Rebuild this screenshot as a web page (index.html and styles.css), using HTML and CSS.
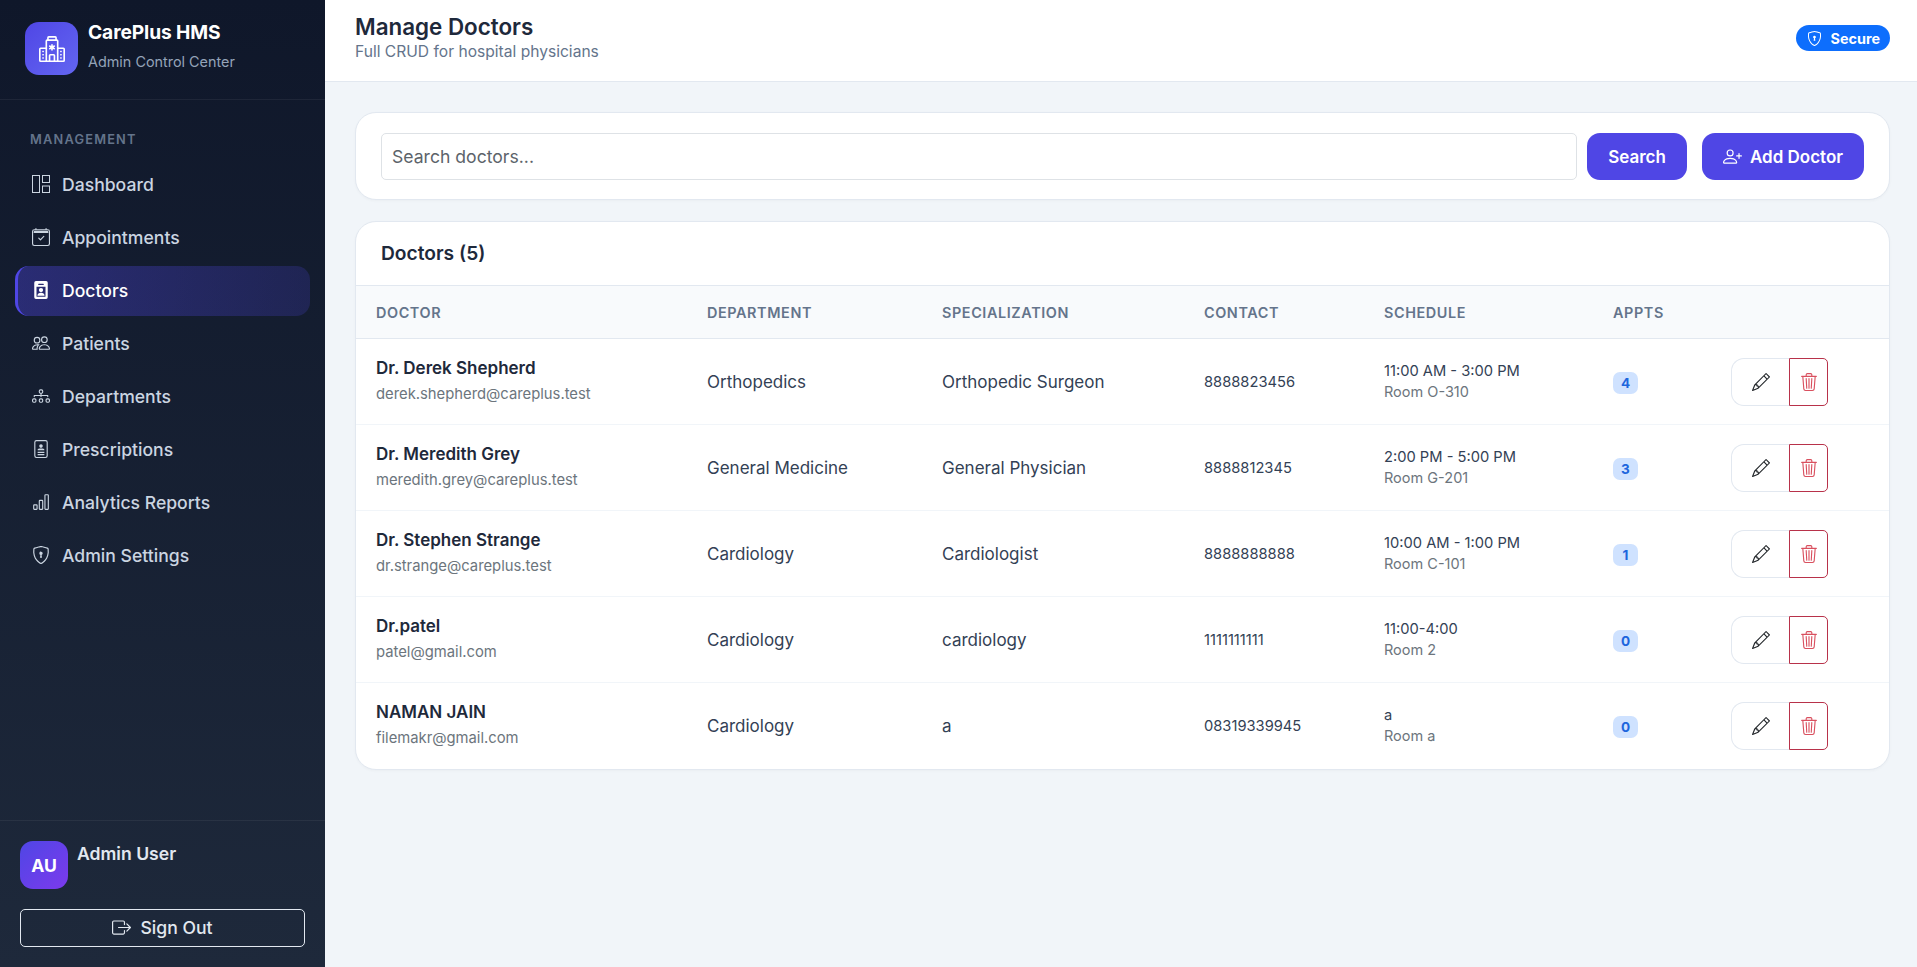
FILE: index.html
```html
<!DOCTYPE html>
<html lang="en">
<head>
<meta charset="utf-8">
<title>Manage Doctors</title>
<link rel="stylesheet" href="styles.css">
</head>
<body>
<svg class="sprite" width="0" height="0" aria-hidden="true">
  <symbol id="i-pencil" viewBox="0 0 16 16"><path fill="currentColor" d="M12.146.146a.5.5 0 0 1 .708 0l3 3a.5.5 0 0 1 0 .708l-10 10a.5.5 0 0 1-.168.11l-5 2a.5.5 0 0 1-.65-.65l2-5a.5.5 0 0 1 .11-.168l10-10zM11.207 2.5 13.5 4.793 14.793 3.5 12.5 1.207 11.207 2.5zm1.586 3L10.5 3.207 4 9.707V10h.5a.5.5 0 0 1 .5.5v.5h.5a.5.5 0 0 1 .5.5v.5h.293l6.5-6.5zm-9.761 5.175-.106.106-1.528 3.821 3.821-1.528.106-.106A.5.5 0 0 1 5 12.5V12h-.5a.5.5 0 0 1-.5-.5V11h-.5a.5.5 0 0 1-.468-.325z"/></symbol>
  <symbol id="i-trash" viewBox="0 0 16 16"><path fill="currentColor" d="M6.5 1h3a.5.5 0 0 1 .5.5v1H6v-1a.5.5 0 0 1 .5-.5ZM11 2.5v-1A1.5 1.5 0 0 0 9.5 0h-3A1.5 1.5 0 0 0 5 1.5v1H2.506a.58.58 0 0 0-.01 0H1.5a.5.5 0 0 0 0 1h.538l.853 10.66A2 2 0 0 0 4.885 16h6.23a2 2 0 0 0 1.994-1.84l.853-10.66h.538a.5.5 0 0 0 0-1h-.995a.59.59 0 0 0-.01 0H11Zm1.958 1-.846 10.58a1 1 0 0 1-.997.92h-6.23a1 1 0 0 1-.997-.92L3.042 3.5h9.916Zm-7.487 1a.5.5 0 0 1 .528.47l.5 8.5a.5.5 0 0 1-.998.06L5 5.03a.5.5 0 0 1 .47-.53Zm5.058 0a.5.5 0 0 1 .47.53l-.5 8.5a.5.5 0 1 1-.998-.06l.5-8.5a.5.5 0 0 1 .528-.47ZM8 4.5a.5.5 0 0 1 .5.5v8.5a.5.5 0 0 1-1 0V5a.5.5 0 0 1 .5-.5Z"/></symbol>
  <symbol id="i-shield" viewBox="0 0 16 16"><path fill="currentColor" d="M5.338 1.59a61.44 61.44 0 0 0-2.837.856.481.481 0 0 0-.328.39c-.554 4.157.726 7.19 2.253 9.188a10.725 10.725 0 0 0 2.287 2.233c.346.244.652.42.893.533.12.057.218.095.293.118a.55.55 0 0 0 .101.025.615.615 0 0 0 .1-.025c.076-.023.174-.061.294-.118.24-.113.547-.29.893-.533a10.726 10.726 0 0 0 2.287-2.233c1.527-1.997 2.807-5.031 2.253-9.188a.48.48 0 0 0-.328-.39c-.651-.213-1.75-.56-2.837-.855C9.552 1.29 8.531 1.067 8 1.067c-.53 0-1.552.223-2.662.524zM5.072.56C6.157.265 7.31 0 8 0s1.843.265 2.928.56c1.11.3 2.229.655 2.887.87a1.54 1.54 0 0 1 1.044 1.262c.596 4.477-.787 7.795-2.465 9.99a11.775 11.775 0 0 1-2.517 2.453 7.159 7.159 0 0 1-1.048.625c-.28.132-.581.24-.829.24s-.548-.108-.829-.24a7.158 7.158 0 0 1-1.048-.625 11.777 11.777 0 0 1-2.517-2.453C1.928 10.487.545 7.169 1.141 2.692A1.54 1.54 0 0 1 2.185 1.43 62.456 62.456 0 0 1 5.072.56z"/><path fill="currentColor" d="M9.5 6.5a1.5 1.5 0 0 1-1 1.415l.385 1.99a.5.5 0 0 1-.491.595h-.788a.5.5 0 0 1-.49-.595l.384-1.99a1.5 1.5 0 1 1 2-1.415z"/></symbol>
</svg>
<div class="app">
  <aside class="sidebar">
    <div class="brand">
      <div class="brand-logo">
        <svg class="brand-icon" viewBox="0 0 16 16"><path fill="currentColor" d="M8.5 5.034v1.1l.953-.55.5.867L9 7l.953.55-.5.866-.953-.55v1.1h-1v-1.1l-.953.55-.5-.866L7 7l-.953-.55.5-.866.953.55v-1.1h1ZM13.25 9a.25.25 0 0 0-.25.25v.5c0 .138.112.25.25.25h.5a.25.25 0 0 0 .25-.25v-.5a.25.25 0 0 0-.25-.25h-.5ZM13 11.25a.25.25 0 0 1 .25-.25h.5a.25.25 0 0 1 .25.25v.5a.25.25 0 0 1-.25.25h-.5a.25.25 0 0 1-.25-.25v-.5Zm.25 1.75a.25.25 0 0 0-.25.25v.5c0 .138.112.25.25.25h.5a.25.25 0 0 0 .25-.25v-.5a.25.25 0 0 0-.25-.25h-.5Zm-11-4a.25.25 0 0 0-.25.25v.5c0 .138.112.25.25.25h.5A.25.25 0 0 0 3 9.75v-.5A.25.25 0 0 0 2.75 9h-.5Zm0 2a.25.25 0 0 0-.25.25v.5c0 .138.112.25.25.25h.5a.25.25 0 0 0 .25-.25v-.5a.25.25 0 0 0-.25-.25h-.5ZM2 13.25a.25.25 0 0 1 .25-.25h.5a.25.25 0 0 1 .25.25v.5a.25.25 0 0 1-.25.25h-.5a.25.25 0 0 1-.25-.25v-.5Z"/><path fill="currentColor" d="M5 1a1 1 0 0 1 1-1h4a1 1 0 0 1 1 1v1a1 1 0 0 1 1 1v4h3a1 1 0 0 1 1 1v7a1 1 0 0 1-1 1H1a1 1 0 0 1-1-1V8a1 1 0 0 1 1-1h3V3a1 1 0 0 1 1-1V1Zm2 14h2v-3H7v3Zm3 0h1V3H5v12h1v-3a1 1 0 0 1 1-1h2a1 1 0 0 1 1 1v3Zm0-14H6v1h4V1Zm2 7v7h3V8h-3Zm-8 7V8H1v7h3Z"/></svg>
      </div>
      <div class="brand-text">
        <div class="brand-name">CarePlus HMS</div>
        <div class="brand-sub">Admin Control Center</div>
      </div>
    </div>
    <nav class="nav">
      <div class="nav-label">MANAGEMENT</div>
      <a class="nav-item">
        <svg class="nav-icon" viewBox="0 0 18 18" fill="none" stroke="currentColor" stroke-width="1"><rect x=".5" y=".5" width="7" height="17" /><rect x="10.5" y=".5" width="7" height="7"/><rect x="10.5" y="11" width="7" height="6.5"/></svg>
        <span>Dashboard</span>
      </a>
      <a class="nav-item">
        <svg class="nav-icon" viewBox="0 0 16 16"><path fill="currentColor" d="M10.854 7.146a.5.5 0 0 1 0 .708l-3 3a.5.5 0 0 1-.708 0l-1.5-1.5a.5.5 0 1 1 .708-.708L7.5 9.793l2.646-2.647a.5.5 0 0 1 .708 0z"/><path fill="currentColor" d="M3.5 0a.5.5 0 0 1 .5.5V1h8V.5a.5.5 0 0 1 1 0V1h1a2 2 0 0 1 2 2v11a2 2 0 0 1-2 2H2a2 2 0 0 1-2-2V3a2 2 0 0 1 2-2h1V.5a.5.5 0 0 1 .5-.5zM2 2a1 1 0 0 0-1 1v11a1 1 0 0 0 1 1h12a1 1 0 0 0 1-1V3a1 1 0 0 0-1-1H2z"/><path fill="currentColor" d="M2.5 2.5h11a1 1 0 0 1 1 1v1h-13v-1a1 1 0 0 1 1-1z"/></svg>
        <span>Appointments</span>
      </a>
      <a class="nav-item active">
        <svg class="nav-icon" viewBox="0 0 16 16"><path fill="currentColor" fill-rule="evenodd" d="M3.5 0A1.5 1.5 0 0 0 2 1.5v13A1.5 1.5 0 0 0 3.5 16h9a1.5 1.5 0 0 0 1.5-1.5v-13A1.5 1.5 0 0 0 12.5 0h-9ZM6 2.5h4a.5.5 0 0 1 0 1H6a.5.5 0 0 1 0-1ZM4 5h8v8.500a.5.5 0 0 1-.5.5h-7a.5.5 0 0 1-.5-.5V5Z"/><path fill="currentColor" d="M8 6.200a1.900 1.900 0 1 1 0 3.800 1.900 1.900 0 0 1 0-3.800ZM4.800 13.200c0-1.800 1.400-2.700 3.200-2.700s3.200.9 3.200 2.700H4.800Z"/></svg>
        <span>Doctors</span>
      </a>
      <a class="nav-item">
        <svg class="nav-icon" viewBox="0 0 16 16"><path fill="currentColor" d="M15 14s1 0 1-1-1-4-5-4-5 3-5 4 1 1 1 1h8zm-7.978-1A.261.261 0 0 1 7 12.996c.001-.264.167-1.030.76-1.720C8.312 10.629 9.282 10 11 10c1.717 0 2.687.63 3.240 1.276.593.69.758 1.457.76 1.720l-.008.002a.274.274 0 0 1-.014.002H7.022zM11 7a2 2 0 1 0 0-4 2 2 0 0 0 0 4zm3-2a3 3 0 1 1-6 0 3 3 0 0 1 6 0zM6.936 9.280a5.880 5.880 0 0 0-1.230-.247A7.350 7.350 0 0 0 5 9c-4 0-5 3-5 4 0 .667.333 1 1 1h4.216A2.238 2.238 0 0 1 5 13c0-1.010.377-2.042 1.090-2.904.243-.294.526-.569.846-.816zM4.920 10A5.420 5.420 0 0 0 4 13H1c0-.260.164-1.030.76-1.724.545-.636 1.492-1.256 3.160-1.275zM1.500 5.500a3 3 0 1 1 6 0 3 3 0 0 1-6 0zm3-2a2 2 0 1 0 0 4 2 2 0 0 0 0-4z"/></svg>
        <span>Patients</span>
      </a>
      <a class="nav-item">
        <svg class="nav-icon" viewBox="0 0 16 16"><path fill="currentColor" fill-rule="evenodd" d="M6 3.5A1.5 1.5 0 0 1 7.5 2h1A1.5 1.5 0 0 1 10 3.5v1A1.5 1.5 0 0 1 8.5 6v1H14a.5.5 0 0 1 .5.5v1a.5.5 0 0 1-1 0V8h-5v.5a.5.5 0 0 1-1 0V8h-5v.5a.5.5 0 0 1-1 0v-1A.5.5 0 0 1 2 7h5.5V6A1.5 1.5 0 0 1 6 4.5v-1zM8.5 5a.5.5 0 0 0 .5-.5v-1a.5.5 0 0 0-.5-.5h-1a.5.5 0 0 0-.5.5v1a.5.5 0 0 0 .5.5h1zM0 11.500A1.500 1.500 0 0 1 1.500 10h1A1.500 1.500 0 0 1 4 11.500v1A1.500 1.500 0 0 1 2.500 14h-1A1.500 1.500 0 0 1 0 12.500v-1zm1.500-.5a.5.5 0 0 0-.5.5v1a.5.5 0 0 0 .5.5h1a.5.5 0 0 0 .5-.5v-1a.5.5 0 0 0-.5-.5h-1zm4.500.5A1.500 1.500 0 0 1 7.500 10h1a1.500 1.500 0 0 1 1.500 1.500v1A1.500 1.500 0 0 1 8.500 14h-1A1.500 1.500 0 0 1 6 12.500v-1zm1.500-.5a.5.5 0 0 0-.5.5v1a.5.5 0 0 0 .5.5h1a.5.5 0 0 0 .5-.5v-1a.5.5 0 0 0-.5-.5h-1zm4.500.5a1.500 1.500 0 0 1 1.500-1.500h1a1.500 1.500 0 0 1 1.500 1.500v1a1.500 1.500 0 0 1-1.500 1.500h-1a1.500 1.500 0 0 1-1.500-1.500v-1zm1.500-.5a.5.5 0 0 0-.5.5v1a.5.5 0 0 0 .5.5h1a.5.5 0 0 0 .5-.5v-1a.5.5 0 0 0-.5-.5h-1z"/></svg>
        <span>Departments</span>
      </a>
      <a class="nav-item">
        <svg class="nav-icon" viewBox="0 0 16 16"><path fill="currentColor" d="M8 7a1.600 1.600 0 1 0 0-3.200A1.600 1.600 0 0 0 8 7Zm-3 1.600c0-.6.9-1 3-1s3 .4 3 1v.4H5v-.4Z"/><path fill="currentColor" d="M5 10.500h6v1H5zM5 12.500h6v1H5z"/><path fill="currentColor" d="M4 0h8a2 2 0 0 1 2 2v12a2 2 0 0 1-2 2H4a2 2 0 0 1-2-2V2a2 2 0 0 1 2-2Zm0 1a1 1 0 0 0-1 1v12a1 1 0 0 0 1 1h8a1 1 0 0 0 1-1V2a1 1 0 0 0-1-1H4Z"/></svg>
        <span>Prescriptions</span>
      </a>
      <a class="nav-item">
        <svg class="nav-icon" viewBox="0 0 16 16"><path fill="currentColor" d="M4 11H2v3h2v-3zm5-4H7v7h2V7zm5-5v12h-2V2h2zm-2-1a1 1 0 0 0-1 1v12a1 1 0 0 0 1 1h2a1 1 0 0 0 1-1V2a1 1 0 0 0-1-1h-2zM6 7a1 1 0 0 1 1-1h2a1 1 0 0 1 1 1v7a1 1 0 0 1-1 1H7a1 1 0 0 1-1-1V7zm-5 4a1 1 0 0 1 1-1h2a1 1 0 0 1 1 1v3a1 1 0 0 1-1 1H2a1 1 0 0 1-1-1v-3z"/></svg>
        <span>Analytics Reports</span>
      </a>
      <a class="nav-item">
        <svg class="nav-icon"><use href="#i-shield"/></svg>
        <span>Admin Settings</span>
      </a>
    </nav>
    <div class="side-foot">
      <div class="user">
        <div class="avatar">AU</div>
        <div class="user-name">Admin User</div>
      </div>
      <button class="signout">
        <svg class="signout-icon" viewBox="0 0 16 16"><path fill="currentColor" fill-rule="evenodd" d="M10 12.500a.5.5 0 0 1-.5.5h-8a.5.5 0 0 1-.5-.5v-9a.5.5 0 0 1 .5-.5h8a.5.5 0 0 1 .5.5v2a.5.5 0 0 0 1 0v-2A1.500 1.500 0 0 0 9.500 2h-8A1.500 1.500 0 0 0 0 3.500v9A1.500 1.500 0 0 0 1.500 14h8a1.500 1.500 0 0 0 1.500-1.500v-2a.5.5 0 0 0-1 0v2z"/><path fill="currentColor" fill-rule="evenodd" d="M15.854 8.354a.5.5 0 0 0 0-.708l-3-3a.5.5 0 0 0-.708.708L14.293 7.500H5.500a.5.5 0 0 0 0 1h8.793l-2.147 2.146a.5.5 0 0 0 .708.708l3-3z"/></svg>
        <span>Sign Out</span>
      </button>
    </div>
  </aside>
  <div class="main">
    <header class="topbar">
      <div>
        <h1 class="title">Manage Doctors</h1>
        <div class="subtitle">Full CRUD for hospital physicians</div>
      </div>
      <div class="secure"><svg class="secure-icon"><use href="#i-shield"/></svg><span>Secure</span></div>
    </header>
    <main class="content">
      <section class="card search-card">
        <input class="search-input" type="text" placeholder="Search doctors...">
        <button class="btn">Search</button>
        <button class="btn btn-add">
          <svg class="btn-icon" viewBox="0 0 16 16"><path fill="currentColor" d="M6 8a3 3 0 1 0 0-6 3 3 0 0 0 0 6zm2-3a2 2 0 1 1-4 0 2 2 0 0 1 4 0zm4 8c0 1-1 1-1 1H1s-1 0-1-1 1-4 6-4 6 3 6 4zm-1-.004c-.001-.246-.154-.986-.832-1.664C9.516 10.680 8.289 10 6 10c-2.290 0-3.516.68-4.168 1.332-.678.678-.83 1.418-.832 1.664h10z"/><path fill="currentColor" d="M13.500 5a.5.5 0 0 1 .5.5V7h1.500a.5.5 0 0 1 0 1H14v1.500a.5.5 0 0 1-1 0V8h-1.500a.5.5 0 0 1 0-1H13V5.500a.5.5 0 0 1 .5-.5z"/></svg>
          <span>Add Doctor</span>
        </button>
      </section>
      <section class="card table-card">
        <h2 class="table-title">Doctors (5)</h2>
        <table class="table">
          <colgroup>
            <col class="c-doctor"><col class="c-dept"><col class="c-spec"><col class="c-contact"><col class="c-sched"><col class="c-appts"><col>
          </colgroup>
          <thead>
            <tr><th>Doctor</th><th>Department</th><th>Specialization</th><th>Contact</th><th>Schedule</th><th>Appts</th><th></th></tr>
          </thead>
          <tbody>
            <tr>
              <td><div class="doc-name">Dr. Derek Shepherd</div><div class="doc-mail">derek.shepherd@careplus.test</div></td>
              <td>Orthopedics</td><td>Orthopedic Surgeon</td><td class="small">8888823456</td>
              <td class="small"><div>11:00 AM - 3:00 PM</div><div class="room">Room O-310</div></td>
              <td><span class="count">4</span></td>
              <td><div class="actions"><button class="act act-edit"><svg class="act-icon"><use href="#i-pencil"/></svg></button><button class="act act-del"><svg class="act-icon"><use href="#i-trash"/></svg></button></div></td>
            </tr>
            <tr>
              <td><div class="doc-name">Dr. Meredith Grey</div><div class="doc-mail">meredith.grey@careplus.test</div></td>
              <td>General Medicine</td><td>General Physician</td><td class="small">8888812345</td>
              <td class="small"><div>2:00 PM - 5:00 PM</div><div class="room">Room G-201</div></td>
              <td><span class="count">3</span></td>
              <td><div class="actions"><button class="act act-edit"><svg class="act-icon"><use href="#i-pencil"/></svg></button><button class="act act-del"><svg class="act-icon"><use href="#i-trash"/></svg></button></div></td>
            </tr>
            <tr>
              <td><div class="doc-name">Dr. Stephen Strange</div><div class="doc-mail">dr.strange@careplus.test</div></td>
              <td>Cardiology</td><td>Cardiologist</td><td class="small">8888888888</td>
              <td class="small"><div>10:00 AM - 1:00 PM</div><div class="room">Room C-101</div></td>
              <td><span class="count">1</span></td>
              <td><div class="actions"><button class="act act-edit"><svg class="act-icon"><use href="#i-pencil"/></svg></button><button class="act act-del"><svg class="act-icon"><use href="#i-trash"/></svg></button></div></td>
            </tr>
            <tr>
              <td><div class="doc-name">Dr.patel</div><div class="doc-mail">patel@gmail.com</div></td>
              <td>Cardiology</td><td>cardiology</td><td class="small">1111111111</td>
              <td class="small"><div>11:00-4:00</div><div class="room">Room 2</div></td>
              <td><span class="count">0</span></td>
              <td><div class="actions"><button class="act act-edit"><svg class="act-icon"><use href="#i-pencil"/></svg></button><button class="act act-del"><svg class="act-icon"><use href="#i-trash"/></svg></button></div></td>
            </tr>
            <tr>
              <td><div class="doc-name">NAMAN JAIN</div><div class="doc-mail">filemakr@gmail.com</div></td>
              <td>Cardiology</td><td>a</td><td class="small">08319339945</td>
              <td class="small"><div>a</div><div class="room">Room a</div></td>
              <td><span class="count">0</span></td>
              <td><div class="actions"><button class="act act-edit"><svg class="act-icon"><use href="#i-pencil"/></svg></button><button class="act act-del"><svg class="act-icon"><use href="#i-trash"/></svg></button></div></td>
            </tr>
          </tbody>
        </table>
      </section>
    </main>
  </div>
</div>
</body>
</html>
```

FILE: styles.css
```css
* { box-sizing: border-box; }
html, body { margin: 0; height: 100%; }
body { font-family: Inter, "Liberation Sans", sans-serif; color: #1e293b; background: #f1f5f9; overflow: hidden; }
.sprite { position: absolute; }
.app { display: flex; height: 967px; }

.sidebar { width: 325px; flex: none; display: flex; flex-direction: column; background: linear-gradient(180deg, #0f172a 0%, #1e293b 100%); color: #fff; }
.brand { height: 100px; padding: 22px 25px 0; display: flex; gap: 10px; border-bottom: 1px solid rgba(255,255,255,.06); }
.brand-logo { width: 53px; height: 53px; border-radius: 14px; background: linear-gradient(135deg, #4f46e5, #6366f1); display: flex; align-items: center; justify-content: center; }
.brand-icon { width: 26px; height: 26px; color: #fff; }
.brand-name { font-size: 19.2px; font-weight: 700; line-height: 20px; letter-spacing: -.1px; }
.brand-sub { font-size: 14.4px; line-height: 20px; color: #94a3b8; margin-top: 10px; }

.nav { flex: 1; padding: 30px 15px 0; display: flex; flex-direction: column; }
.nav-label { font-size: 12.8px; font-weight: 600; letter-spacing: 1.2px; color: #64748b; padding-left: 15px; line-height: 20px; margin-bottom: 10px; }
.nav-item { height: 50px; margin-bottom: 3px; padding: 0 0 2px 14px; display: flex; align-items: center; gap: 12px; font-size: 17.6px; font-weight: 500; color: #cbd5e1; border-radius: 14px; border-left: 3px solid transparent; }
.nav-item .nav-icon { width: 18px; height: 18px; flex: none; }
.nav-item.active { color: #fff; border-left-color: #4f46e5; background: linear-gradient(90deg, rgba(79,70,229,.38), rgba(79,70,229,.2)); }

.side-foot { border-top: 1px solid rgba(255,255,255,.06); padding: 20px; height: 147px; }
.user { display: flex; gap: 9px; height: 48px; }
.avatar { width: 48px; height: 48px; border-radius: 13px; background: linear-gradient(135deg, #4f46e5, #7c3aed); display: flex; align-items: center; justify-content: center; font-size: 17.6px; font-weight: 700; color: #fff; }
.user-name { font-size: 17.6px; font-weight: 600; color: #e2e8f0; line-height: 24px; margin-top: 1px; }
.signout { margin-top: 20px; width: 285px; height: 38px; background: transparent; border: 1px solid #e2e8f0; border-radius: 5px; color: #e2e8f0; font: 500 17.6px Inter, "Liberation Sans", sans-serif; display: flex; align-items: center; justify-content: center; gap: 9px; padding: 0 0 1px; }
.signout-icon { width: 19px; height: 19px; }

.main { flex: 1; min-width: 0; display: flex; flex-direction: column; }
.topbar { height: 82px; background: #fff; border-bottom: 1px solid #e2e8f0; padding: 13px 27px 0 30px; display: flex; justify-content: space-between; align-items: flex-start; }
.title { margin: 0; font-size: 22.4px; font-weight: 600; line-height: 28px; color: #1e293b; }
.subtitle { font-size: 15.6px; line-height: 20px; color: #64748b; margin-top: 1px; }
.secure { margin-top: 12px; height: 26px; padding: 0 10px 0 11px; border-radius: 13px; background: #0d6efd; color: #fff; display: flex; align-items: center; gap: 8px; font-size: 14.4px; font-weight: 700; }
.secure-icon { width: 15px; height: 15px; }

.content { padding: 30px 27px 0 30px; display: flex; flex-direction: column; gap: 21px; }
.card { background: #fff; border: 1px solid #e2e8f0; border-radius: 21px; box-shadow: 0 1px 3px rgba(15,23,42,.03); }
.search-card { height: 88px; padding: 20px 25px 0; display: flex; gap: 10px; align-items: flex-start; }
.search-input { flex: 1; min-width: 0; height: 47px; border: 1px solid #dee2e6; border-radius: 5px; padding: 0 10px; font: 400 17.6px Inter, "Liberation Sans", sans-serif; color: #212529; }
.search-input::placeholder { color: #5c636a; opacity: 1; }
.btn { height: 47px; border: 0; border-radius: 13px; background: #4f46e5; color: #fff; font: 600 17px Inter, "Liberation Sans", sans-serif; padding: 0 21px; display: flex; align-items: center; }
.btn-add { margin-left: 5px; gap: 8px; }
.btn-icon { width: 19px; height: 19px; }

.table-card { overflow: hidden; }
.table-title { margin: 0; height: 63px; padding: 19px 25px 0; font-size: 19.2px; font-weight: 600; line-height: 24px; color: #1e293b; }
.table { width: 100%; border-collapse: collapse; table-layout: fixed; }
.c-doctor { width: 331px; }
.c-dept { width: 235px; }
.c-spec { width: 262px; }
.c-contact { width: 180px; }
.c-sched { width: 229px; }
.c-appts { width: 118px; }
.table th { height: 53px; padding: 0 20px; background: #f8fafc; border-top: 1px solid #e2e8f0; border-bottom: 1px solid #e2e8f0; text-align: left; font-size: 14.4px; font-weight: 600; letter-spacing: .6px; color: #64748b; text-transform: uppercase; }
.table td { height: 86px; padding: 0 20px; border-bottom: 1px solid #f1f5f9; font-size: 17px; color: #334155; vertical-align: middle; }
.table tr:last-child td { border-bottom: 0; }
.table td.small { font-size: 14.7px; }
.doc-name { font-size: 17px; font-weight: 600; color: #1e293b; line-height: 24px; }
.doc-mail { font-size: 14.8px; color: #6c757d; line-height: 20px; margin: 4px 0 3px; }
.room { font-size: 14.5px; color: #6c757d; line-height: 20px; margin-top: 2px; }
.count { display: inline-block; min-width: 25px; height: 22px; padding: 0 8px; border-radius: 7px; background: #cfe2ff; color: #1d66dd; font-size: 13.6px; font-weight: 700; line-height: 22px; text-align: center; position: relative; top: 1px; }
.actions { display: flex; }
.act { height: 48px; display: flex; align-items: center; justify-content: center; padding: 0; background: #fff; }
.act-edit { width: 58px; border: 1px solid #e2e8f0; border-right: 0; border-radius: 13px 0 0 13px; color: #212529; }
.act-del { width: 39px; border: 1px solid #b8324a; border-radius: 0 5px 5px 0; color: #d9505f; }
.act-icon { width: 18px; height: 18px; }
```
